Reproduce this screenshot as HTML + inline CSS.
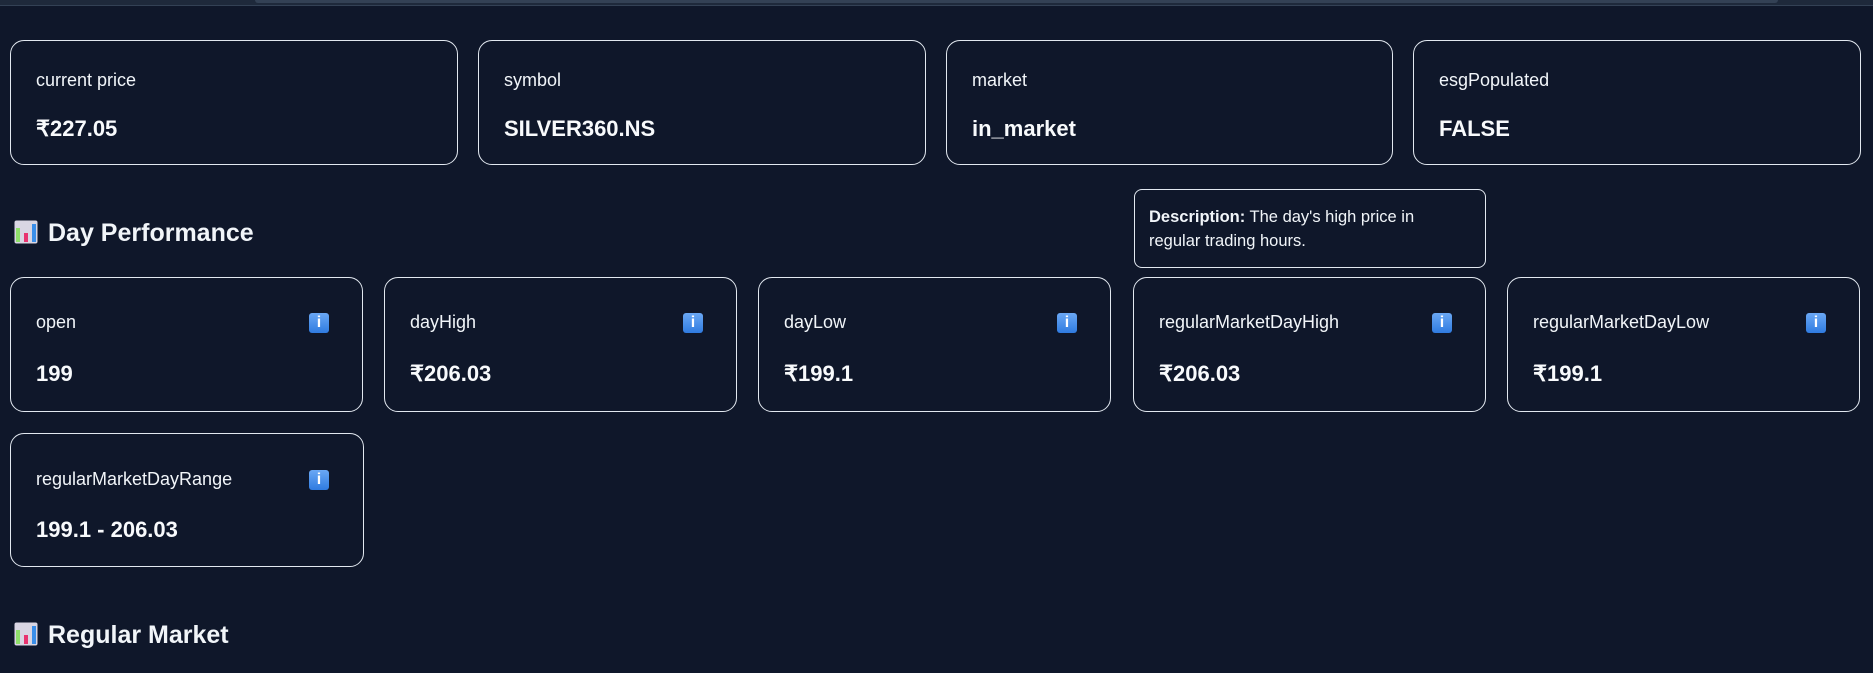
<!DOCTYPE html>
<html><head><meta charset="utf-8"><style>
*{margin:0;padding:0;box-sizing:border-box}
body{width:1873px;height:673px;background:#0f172a;position:relative;overflow:hidden;font-family:"Liberation Sans",sans-serif;color:#f1f5f9}
.top{position:absolute;left:0;top:0;width:1873px;height:6px;background:#1e293b;border-bottom:1px solid #334155}
.topbar{position:absolute;left:255px;top:0;width:1523px;height:3px;background:#334155;border-radius:0 0 3px 3px}
.card{position:absolute;border:1.5px solid #e2e8f0;border-radius:14px}
.lab{position:absolute;left:25px;font-size:18px;line-height:20px;color:#f1f5f9}
.val{position:absolute;left:25px;font-size:22px;font-weight:bold;line-height:24px;color:#f8fafc}
.info{position:absolute;width:20px;height:20px;border-radius:3px;background:linear-gradient(#6aa8f5,#2f7be0);color:#fff;font-size:16px;font-weight:bold;text-align:center;line-height:20px}
.h{position:absolute;left:14px;font-size:25px;font-weight:bold;line-height:26px;color:#f1f5f9}
.h svg{vertical-align:-3px;margin-right:10px}
.tip{position:absolute;left:1134px;top:189px;width:352px;height:79px;border:1.5px solid #e2e8f0;border-radius:8px;padding:15px 40px 15px 14px;font-size:16.5px;line-height:24px}
</style></head><body>
<div class="top"><div class="topbar"></div></div>

<div class="card" style="left:10px;top:40px;width:448px;height:125px"><div class="lab" style="top:29px">current price</div><div class="val" style="top:76px">₹227.05</div></div>
<div class="card" style="left:478px;top:40px;width:448px;height:125px"><div class="lab" style="top:29px">symbol</div><div class="val" style="top:76px">SILVER360.NS</div></div>
<div class="card" style="left:946px;top:40px;width:447px;height:125px"><div class="lab" style="top:29px">market</div><div class="val" style="top:76px">in_market</div></div>
<div class="card" style="left:1413px;top:40px;width:448px;height:125px"><div class="lab" style="top:29px">esgPopulated</div><div class="val" style="top:76px">FALSE</div></div>

<div class="h" style="top:220px"><svg width="24" height="24" viewBox="0 0 24 24"><rect x="0.5" y="0.5" width="23" height="23" rx="2" fill="#d9d6e3"/><rect x="2" y="8" width="4" height="14" fill="#8fe06a"/><rect x="10" y="13" width="4" height="9" fill="#e8336f"/><rect x="18" y="4" width="4" height="18" fill="#3a8ee8"/></svg>Day Performance</div>

<div class="tip"><b>Description:</b> The day's high price in<br>regular trading hours.</div>

<div class="card" style="left:10px;top:277px;width:353px;height:135px"><div class="lab" style="top:34px">open</div><div class="info" style="left:298px;top:35px">i</div><div class="val" style="top:84px">199</div></div>
<div class="card" style="left:384px;top:277px;width:353px;height:135px"><div class="lab" style="top:34px">dayHigh</div><div class="info" style="left:298px;top:35px">i</div><div class="val" style="top:84px">₹206.03</div></div>
<div class="card" style="left:758px;top:277px;width:353px;height:135px"><div class="lab" style="top:34px">dayLow</div><div class="info" style="left:298px;top:35px">i</div><div class="val" style="top:84px">₹199.1</div></div>
<div class="card" style="left:1133px;top:277px;width:353px;height:135px"><div class="lab" style="top:34px">regularMarketDayHigh</div><div class="info" style="left:298px;top:35px">i</div><div class="val" style="top:84px">₹206.03</div></div>
<div class="card" style="left:1507px;top:277px;width:353px;height:135px"><div class="lab" style="top:34px">regularMarketDayLow</div><div class="info" style="left:298px;top:35px">i</div><div class="val" style="top:84px">₹199.1</div></div>

<div class="card" style="left:10px;top:433px;width:354px;height:134px"><div class="lab" style="top:35px">regularMarketDayRange</div><div class="info" style="left:298px;top:36px">i</div><div class="val" style="top:84px">199.1 - 206.03</div></div>

<div class="h" style="top:622px"><svg width="24" height="24" viewBox="0 0 24 24"><rect x="0.5" y="0.5" width="23" height="23" rx="2" fill="#d9d6e3"/><rect x="2" y="8" width="4" height="14" fill="#8fe06a"/><rect x="10" y="13" width="4" height="9" fill="#e8336f"/><rect x="18" y="4" width="4" height="18" fill="#3a8ee8"/></svg>Regular Market</div>
</body></html>
